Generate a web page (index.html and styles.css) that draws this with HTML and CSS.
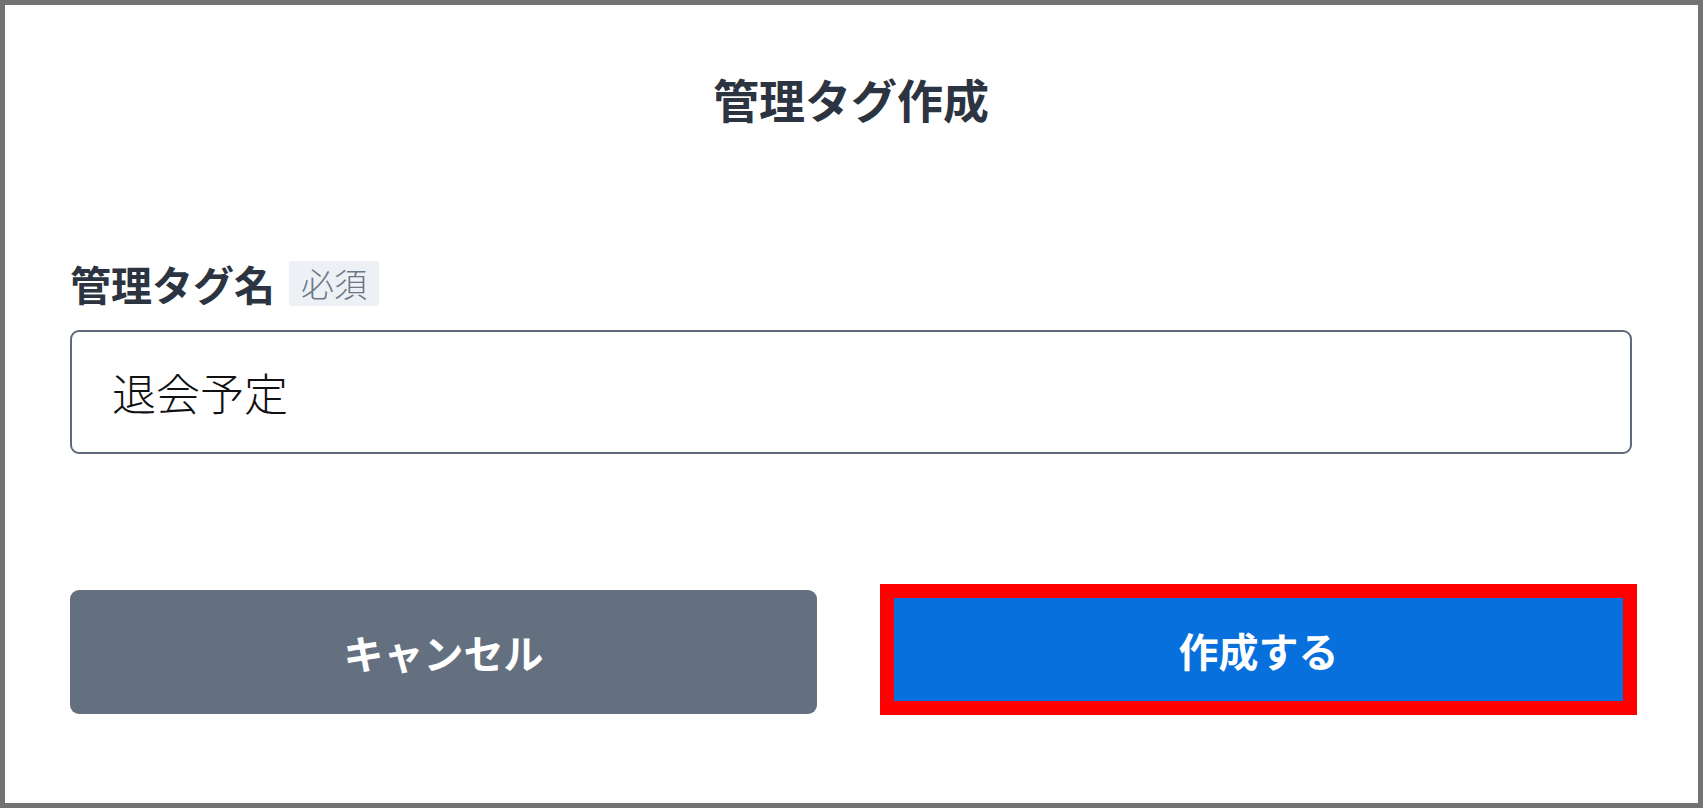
FILE: index.html
```html
<!DOCTYPE html>
<html lang="ja">
<head>
<meta charset="utf-8">
<title>管理タグ作成</title>
<link rel="stylesheet" href="styles.css">
</head>
<body>
<div class="frame">
  <h1 class="title">管理タグ作成</h1>
  <div class="label-row">
    <span class="label">管理タグ名</span>
    <span class="badge">必須</span>
  </div>
  <input class="text-input" type="text" value="退会予定">
  <div class="actions">
    <button class="btn btn-cancel" type="button">キャンセル</button>
    <button class="btn btn-primary" type="button">作成する</button>
  </div>
</div>
</body>
</html>
```

FILE: styles.css
```css
* { box-sizing: border-box; }
html, body {
  margin: 0;
  padding: 0;
  background: #ffffff;
}
body {
  font-family: "Noto Sans CJK JP", "Noto Sans", sans-serif;
}
.frame {
  width: 1703px;
  height: 808px;
  border: 5px solid #737373;
  background: #ffffff;
  padding: 70px 66px 0 65px;
}
.title {
  margin: 0;
  font-size: 46px;
  line-height: 46px;
  font-weight: 700;
  color: #2b3440;
  text-align: center;
}
.label-row {
  margin-top: 140px;
  display: flex;
  align-items: center;
  gap: 14px;
  height: 45px;
}
.label {
  font-size: 41px;
  line-height: 45px;
  font-weight: 700;
  color: #2b3440;
}
.badge {
  height: 45px;
  line-height: 45px;
  padding: 0 12px;
  font-size: 33px;
  font-weight: 300;
  color: #6b7787;
  background: #edf1f6;
  border-radius: 3px;
}
.text-input {
  display: block;
  width: 100%;
  margin-top: 24px;
  height: 124px;
  border: 2.5px solid #5f6b7a;
  border-radius: 9px;
  padding: 0 0 0 40px;
  font-family: "Noto Sans CJK JP", "Noto Sans", sans-serif;
  font-size: 44px;
  font-weight: 300;
  color: #111111;
  background: #ffffff;
  outline: none;
}
.actions {
  margin-top: 130px;
  display: flex;
  align-items: flex-start;
  gap: 63px;
  margin-right: -5px;
}
.btn {
  font-family: "Noto Sans CJK JP", "Noto Sans", sans-serif;
  font-size: 40px;
  font-weight: 700;
  color: #ffffff;
  cursor: pointer;
  padding: 0;
}
.btn-cancel {
  width: 747px;
  height: 124px;
  margin-top: 6px;
  border: none;
  border-radius: 9px;
  background: #64707f;
}
.btn-primary {
  width: 757px;
  height: 131px;
  border: 14px solid #ff0000;
  border-radius: 0;
  background: #0870dc;
}
```
